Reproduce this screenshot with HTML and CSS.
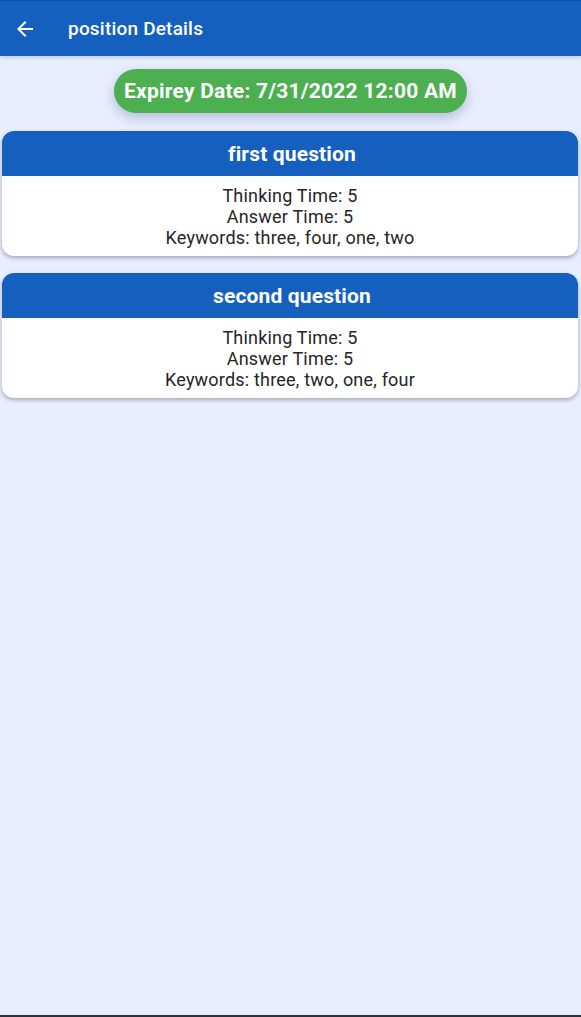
FILE: index.html
```html
<!DOCTYPE html>
<html>
<head>
<meta charset="utf-8">
<link rel="stylesheet" href="styles.css">
</head>
<body>
<div class="screen">
  <header class="appbar">
    <svg class="back" width="24" height="24" viewBox="0 0 24 24"><path d="M20 11H7.83l5.59-5.59L12 4l-8 8 8 8 1.41-1.41L7.83 13H20v-2z" fill="#fff"/></svg>
    <span class="title">position Details</span>
  </header>
  <main class="content">
    <div class="pill-row"><div class="pill">Expirey Date: 7/31/2022 12:00 AM</div></div>
    <div class="card">
      <div class="card-head">first question</div>
      <div class="card-body">
        <div>Thinking Time: 5</div>
        <div>Answer Time: 5</div>
        <div>Keywords: three, four, one, two</div>
      </div>
    </div>
    <div class="card">
      <div class="card-head">second question</div>
      <div class="card-body">
        <div>Thinking Time: 5</div>
        <div>Answer Time: 5</div>
        <div>Keywords: three, two, one, four</div>
      </div>
    </div>
  </main>
  <div class="bottom-bar"></div>
</div>
</body>
</html>
```
FILE: styles.css
```css
* { box-sizing: border-box; }
html, body { margin: 0; padding: 0; }
body {
  font-family: Roboto, "Noto Sans", sans-serif;
  background: #e8eeff;
}
.screen {
  width: 581px;
  height: 1017px;
  display: flex;
  flex-direction: column;
  background: #e8eeff;
  overflow: hidden;
}
.appbar {
  height: 56px;
  flex: none;
  background: #155fbf;
  border-top: 1px solid #0f4fa8;
  display: flex;
  align-items: center;
  padding-left: 13px;
  box-shadow: 0 2px 4px rgba(0,0,0,0.15);
  position: relative;
  z-index: 1;
}
.back { display: block; }
.title {
  margin-left: 31px;
  color: #fff;
  font-size: 19px;
  letter-spacing: 0.2px;
  font-weight: 500;
}
.content {
  flex: 1;
  padding: 13px 3px 0 2px;
  display: flex;
  flex-direction: column;
}
.pill-row {
  display: flex;
  justify-content: center;
  margin-bottom: 18px;
  padding-left: 1px;
}
.pill {
  height: 44px;
  padding: 0 10px;
  border-radius: 22px;
  background: #4caf50;
  color: #fff;
  font-size: 21px;
  letter-spacing: 0.22px;
  font-weight: 700;
  display: flex;
  align-items: center;
  box-shadow: 0 5px 12px rgba(40,50,90,0.25);
}
.card {
  background: #fff;
  border-radius: 12px;
  overflow: hidden;
  box-shadow: 0 2px 4px rgba(0,0,0,0.3);
  margin-bottom: 17px;
}
.card-head {
  height: 45px;
  background: #155fbf;
  color: #fff;
  font-size: 21px;
  letter-spacing: 0.15px;
  font-weight: 700;
  display: flex;
  align-items: center;
  justify-content: center;
  padding-left: 4px;
}
.card-body {
  padding: 9px 0 8px;
  text-align: center;
  color: #262626;
  font-size: 18px;
  letter-spacing: 0.2px;
  line-height: 21px;
}
.bottom-bar {
  height: 2px;
  flex: none;
  background: #2d3436;
}
```
